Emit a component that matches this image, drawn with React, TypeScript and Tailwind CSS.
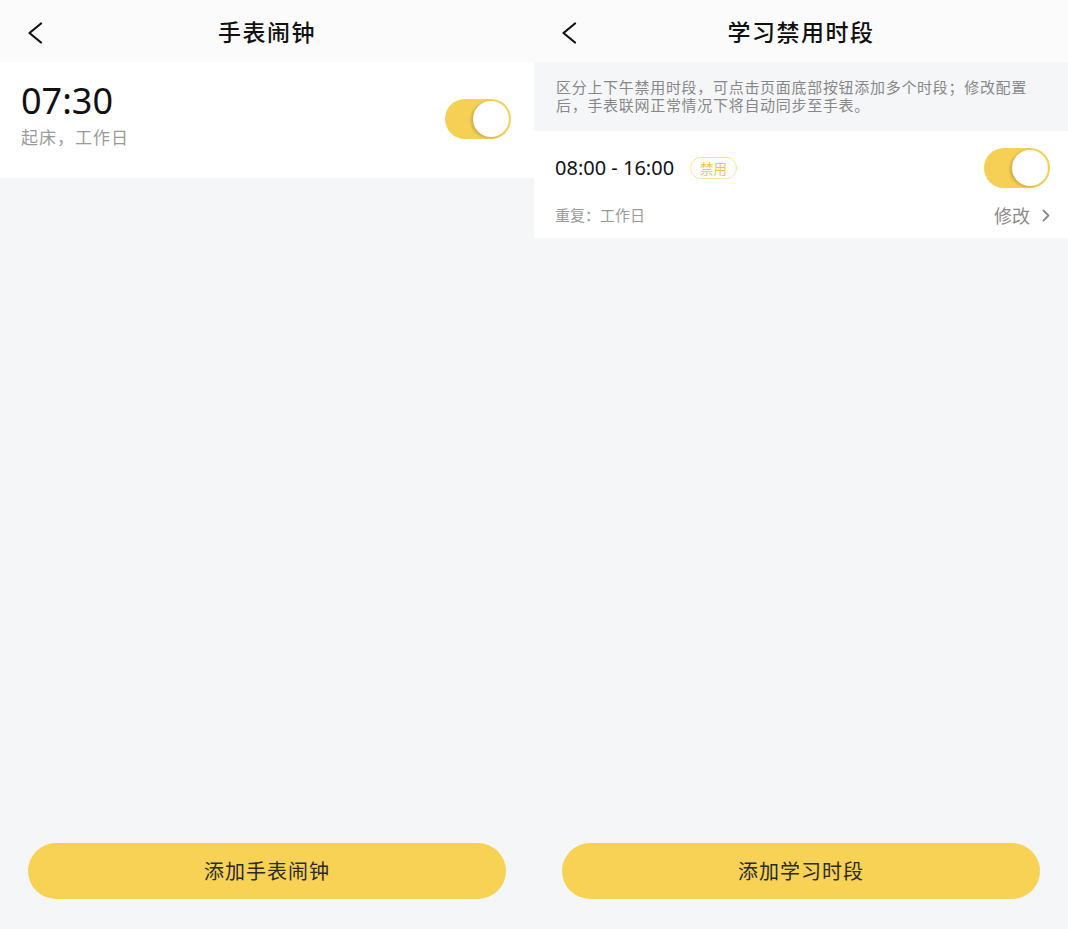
const font = { fontFamily: '"Noto Sans CJK SC", "Noto Sans", sans-serif' };
const latin = { fontFamily: '"Noto Sans", "Noto Sans CJK SC", sans-serif' };

function Toggle() {
  return (
    <div className="relative w-[66px] h-[40px] rounded-full bg-[#f6d055]">
      <div className="absolute right-[2px] top-[2px] w-[36px] h-[36px] rounded-full bg-white shadow-[-2px_1px_3px_rgba(0,0,0,0.18)]" />
    </div>
  );
}

function Header({ title }: { title: string }) {
  return (
    <div className="relative h-[62px] bg-[#fbfbfb] flex items-center justify-center shrink-0">
      <svg className="absolute left-[27px] top-[22px]" width="16" height="22" viewBox="0 0 16 22" fill="none">
        <path d="M14 1.5 L2.5 11 L14 20.5" stroke="#111" strokeWidth="2.2" strokeLinecap="round" strokeLinejoin="round" />
      </svg>
      <span className="text-[23px] font-medium text-[#111] tracking-[1.5px]">{title}</span>
    </div>
  );
}

function AddButton({ label }: { label: string }) {
  return (
    <div className="mt-auto px-[28px] pb-[30px]">
      <button className="w-full h-[56px] rounded-full bg-[#f7d254] text-[20px] text-[#2a2a2a] tracking-[1px]">
        {label}
      </button>
    </div>
  );
}

export default function App() {
  return (
    <div className="flex w-[1068px] h-[929px] bg-[#f5f6f8]" style={font}>
      <div className="w-[534px] h-full flex flex-col">
        <Header title="手表闹钟" />
        <div className="h-[116px] bg-white flex items-start justify-between pl-[21px] pr-[23px]">
          <div className="flex flex-col pt-[19px]">
            <span className="text-[36px] leading-[40px] text-[#111]" style={latin}>07:30</span>
            <span className="text-[17px] leading-[24px] text-[#9a9a9a] mt-[4px] tracking-[1px]">起床，工作日</span>
          </div>
          <div className="pt-[37px]">
            <Toggle />
          </div>
        </div>
        <AddButton label="添加手表闹钟" />
      </div>
      <div className="w-[534px] h-full flex flex-col">
        <Header title="学习禁用时段" />
        <div className="h-[69px] pl-[22px] pr-[28px] pt-[16px] text-[15px] leading-[18px] text-[#888888] tracking-[0.7px]">
          区分上下午禁用时段，可点击页面底部按钮添加多个时段；修改配置后，手表联网正常情况下将自动同步至手表。
        </div>
        <div className="h-[107px] bg-white pl-[21px] pr-[18px] flex flex-col">
          <div className="flex items-center justify-between h-[74px]">
            <div className="flex items-center">
              <span className="text-[20px] text-[#111]" style={latin}>08:00 - 16:00</span>
              <span className="ml-[16px] h-[22px] w-[47px] text-center rounded-full border border-[#fbe39a] text-[13.5px] leading-[20px] text-[#f3c53a]">禁用</span>
            </div>
            <Toggle />
          </div>
          <div className="flex items-center justify-between h-[20px]">
            <span className="text-[15px] text-[#9a9a9a]">重复：工作日</span>
            <div className="flex items-center text-[#8a8a8a]">
              <span className="text-[18px]">修改</span>
              <svg className="ml-[12px]" width="8" height="13" viewBox="0 0 8 13" fill="none">
                <path d="M1.5 1.5 L6.5 6.5 L1.5 11.5" stroke="#8a8a8a" strokeWidth="1.8" strokeLinecap="round" strokeLinejoin="round" />
              </svg>
            </div>
          </div>
        </div>
        <AddButton label="添加学习时段" />
      </div>
    </div>
  );
}
